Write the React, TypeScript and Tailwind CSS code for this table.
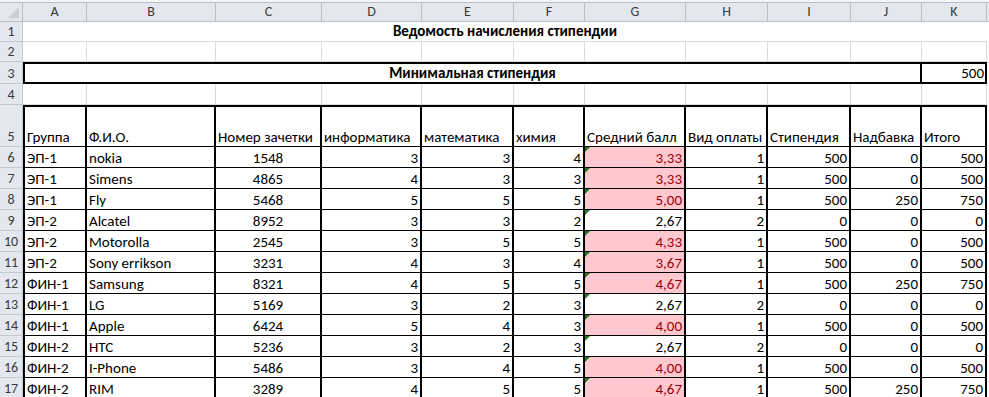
import React from "react";

const COLS = "grid-cols-[23px_64px_129px_106px_100px_92px_71px_101px_82px_83px_71px_65px_2px]";
const LETTERS = ["A", "B", "C", "D", "E", "F", "G", "H", "I", "J", "K"];

type Row = [string, string, string, string, string, string, string, boolean, string, string, string, string];

const DATA: Row[] = [
  ["ЭП-1", "nokia", "1548", "3", "3", "4", "3,33", true, "1", "500", "0", "500"],
  ["ЭП-1", "Simens", "4865", "4", "3", "3", "3,33", true, "1", "500", "0", "500"],
  ["ЭП-1", "Fly", "5468", "5", "5", "5", "5,00", true, "1", "500", "250", "750"],
  ["ЭП-2", "Alcatel", "8952", "3", "3", "2", "2,67", false, "2", "0", "0", "0"],
  ["ЭП-2", "Motorolla", "2545", "3", "5", "5", "4,33", true, "1", "500", "0", "500"],
  ["ЭП-2", "Sony errikson", "3231", "4", "3", "4", "3,67", true, "1", "500", "0", "500"],
  ["ФИН-1", "Samsung", "8321", "4", "5", "5", "4,67", true, "1", "500", "250", "750"],
  ["ФИН-1", "LG", "5169", "3", "2", "3", "2,67", false, "2", "0", "0", "0"],
  ["ФИН-1", "Apple", "6424", "5", "4", "3", "4,00", true, "1", "500", "0", "500"],
  ["ФИН-2", "HTC", "5236", "3", "2", "3", "2,67", false, "2", "0", "0", "0"],
  ["ФИН-2", "I-Phone", "5486", "3", "4", "5", "4,00", true, "1", "500", "0", "500"],
  ["ФИН-2", "RIM", "3289", "4", "5", "5", "4,67", true, "1", "500", "250", "750"],
];

const rowHead =
  "bg-[#e4e8ee] border-r border-b border-[#c2c9d3] text-[#3a3a3a] text-[14px] flex items-end justify-center pb-[2px]";

function RowNum({ n, extra = "" }: { n: number; extra?: string }) {
  return <div className={`${rowHead} ${extra}`}>{n}</div>;
}

function EmptyRow({ n, h }: { n: number; h: string }) {
  return (
    <div className={`grid ${COLS} ${h}`}>
      <RowNum n={n} />
      {LETTERS.map((l) => (
        <div key={l} className="border-r border-b border-[#d9dcdf]" />
      ))}
      <div />
    </div>
  );
}

const cellR = "border-r-2 border-b border-black flex items-end justify-end pr-[2px] pb-[1px]";

export default function App() {
  return (
    <div className="w-[989px] h-[397px] overflow-hidden bg-white text-black font-['Carlito','Lato','Liberation_Sans',sans-serif] text-[15px] leading-none">
      <div className="h-[2px] bg-[#f4f5f7]" />
      {/* column headers */}
      <div className={`grid ${COLS} h-[20px]`}>
        <div className="bg-[#e4e8ee] border-t border-r border-b border-[#b7c0cc] relative">
          <div className="absolute right-[3px] bottom-[3px] w-0 h-0 border-l-[11px] border-l-transparent border-b-[11px] border-b-[#c9cfd7]" />
        </div>
        {LETTERS.map((l) => (
          <div
            key={l}
            className="bg-[#e4e8ee] border-t border-r border-b border-[#b7c0cc] flex items-center justify-center text-[14px] text-[#3a3a3a]"
          >
            {l}
          </div>
        ))}
        <div className="bg-[#e4e8ee] border-t border-b border-[#b7c0cc]" />
      </div>

      {/* row 1 */}
      <div className={`grid ${COLS} h-[20px]`}>
        <RowNum n={1} />
        <div className="col-span-11 border-b border-[#d9dcdf] flex items-end justify-center pb-[2px] font-bold">
          Ведомость начисления стипендии
        </div>
        <div />
      </div>

      {/* row 2 */}
      <EmptyRow n={2} h="h-[20px]" />

      {/* row 3 */}
      <div className={`grid ${COLS} h-[22px]`}>
        <RowNum n={3} />
        <div className="col-span-10 border-2 border-black flex items-end justify-center pb-[1px] font-bold">
          Минимальная стипендия
        </div>
        <div className="border-2 border-l-0 border-black flex items-end justify-end pr-[1px] pb-[1px]">500</div>
        <div />
      </div>

      {/* row 4 */}
      <EmptyRow n={4} h="h-[21px]" />

      {/* row 5 header */}
      <div className={`grid ${COLS} h-[42px]`}>
        <RowNum n={5} />
        {["Группа", "Ф.И.О.", "Номер зачетки", "информатика", "математика", "химия", "Средний балл", "Вид оплаты", "Стипендия", "Надбавка", "Итого"].map(
          (t, i) => (
            <div
              key={t}
              className={`border-t-2 border-r-2 border-b border-black flex items-end pl-[2px] pb-[1px] whitespace-nowrap overflow-hidden ${
                i === 0 ? "border-l-2" : ""
              }`}
            >
              {t}
            </div>
          )
        )}
        <div />
      </div>

      {/* data rows */}
      {DATA.map((r, idx) => (
        <div key={idx} className={`grid ${COLS} h-[21px]`}>
          <RowNum n={idx + 6} />
          <div className="border-l-2 border-r-2 border-b border-black flex items-end pl-[2px] pb-[1px]">{r[0]}</div>
          <div className="border-r-2 border-b border-black flex items-end pl-[2px] pb-[1px] whitespace-nowrap">{r[1]}</div>
          <div className="border-r-2 border-b border-black flex items-end justify-center pb-[1px]">{r[2]}</div>
          <div className={cellR}>{r[3]}</div>
          <div className={cellR}>{r[4]}</div>
          <div className={cellR}>{r[5]}</div>
          <div className={`relative ${cellR} ${r[7] ? "bg-[#ffc7ce] text-[#9c0006]" : ""}`}>
            <div className="absolute left-0 top-0 w-0 h-0 border-t-[5px] border-t-[#1e7b1e] border-r-[5px] border-r-transparent" />
            {r[6]}
          </div>
          <div className={cellR}>{r[8]}</div>
          <div className={cellR}>{r[9]}</div>
          <div className={cellR}>{r[10]}</div>
          <div className={cellR}>{r[11]}</div>
          <div />
        </div>
      ))}
    </div>
  );
}
